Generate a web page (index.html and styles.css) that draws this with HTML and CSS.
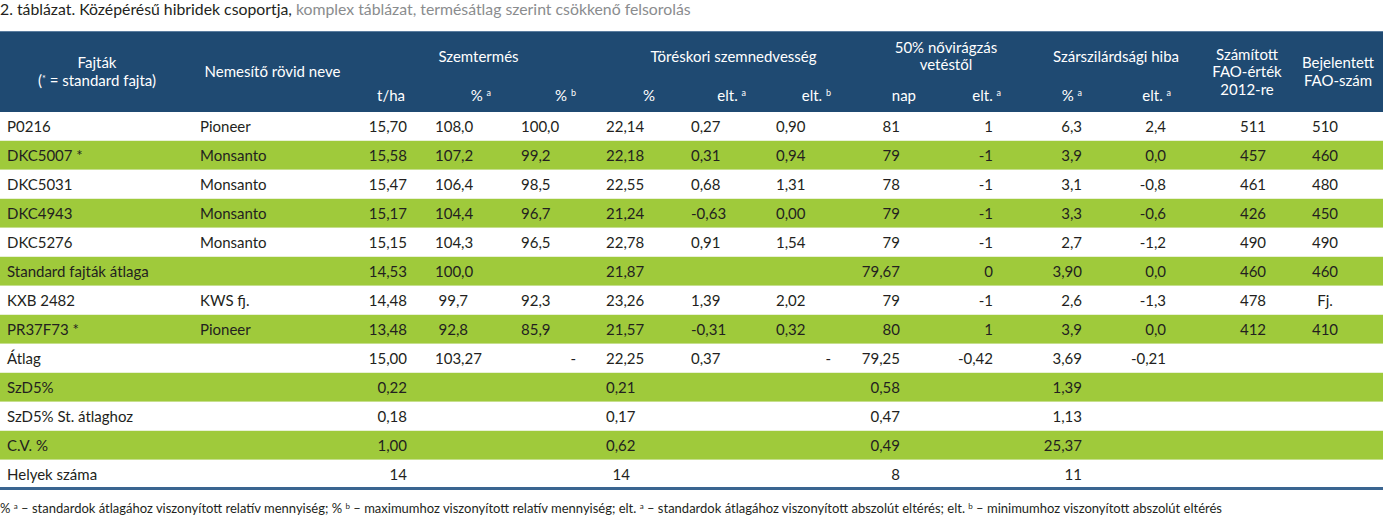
FILE: index.html
```html
<!DOCTYPE html>
<html lang="hu">
<head>
<meta charset="utf-8">
<title>2. táblázat</title>
<link rel="stylesheet" href="styles.css">
</head>
<body>
<div class="page">
  <p class="caption"><span class="cap-strong">2. táblázat. Középérésű hibridek csoportja,</span> <span class="cap-light">komplex táblázat, termésátlag szerint csökkenő felsorolás</span></p>
  <table class="data">
    <colgroup>
      <col class="w194"><col class="w157"><col class="w84">
      <col class="w86"><col class="w85"><col class="w85"><col class="w85"><col class="w85">
      <col class="w85"><col class="w85"><col class="w85"><col class="w85">
      <col class="w92"><col class="w90">
    </colgroup>
    <thead>
      <tr class="hrow1">
        <th rowspan="2" class="hc">Fajták<br>(<sup class="star">*</sup> = standard fajta)</th>
        <th rowspan="2" class="hc">Nemesítő rövid neve</th>
        <th colspan="3" class="hg">Szemtermés</th>
        <th colspan="3" class="hg">Töréskori szemnedvesség</th>
        <th colspan="2" class="hg">50% nővirágzás<br>vetéstől</th>
        <th colspan="2" class="hg">Szárszilárdsági hiba</th>
        <th rowspan="2" class="hc">Számított<br>FAO-érték<br>2012-re</th>
        <th rowspan="2" class="hc">Bejelentett<br>FAO-szám</th>
      </tr>
      <tr class="hrow2">
        <th class="hs">t/ha</th>
        <th class="hs">% <sup>a</sup></th>
        <th class="hs">% <sup>b</sup></th>
        <th class="hs hs-pct">%</th>
        <th class="hs">elt. <sup>a</sup></th>
        <th class="hs">elt. <sup>b</sup></th>
        <th class="hs">nap</th>
        <th class="hs">elt. <sup>a</sup></th>
        <th class="hs hs-pct2">% <sup>a</sup></th>
        <th class="hs">elt. <sup>a</sup></th>
      </tr>
    </thead>
    <tbody>
      <tr><td>P0216</td><td>Pioneer</td><td>15,70</td><td>108,0</td><td>100,0</td><td>22,14</td><td>0,27</td><td>0,90</td><td>81</td><td>1</td><td>6,3</td><td>2,4</td><td>511</td><td>510</td></tr>
      <tr class="g"><td>DKC5007 *</td><td>Monsanto</td><td>15,58</td><td>107,2</td><td>99,2</td><td>22,18</td><td>0,31</td><td>0,94</td><td>79</td><td>-1</td><td>3,9</td><td>0,0</td><td>457</td><td>460</td></tr>
      <tr><td>DKC5031</td><td>Monsanto</td><td>15,47</td><td>106,4</td><td>98,5</td><td>22,55</td><td>0,68</td><td>1,31</td><td>78</td><td>-1</td><td>3,1</td><td>-0,8</td><td>461</td><td>480</td></tr>
      <tr class="g"><td>DKC4943</td><td>Monsanto</td><td>15,17</td><td>104,4</td><td>96,7</td><td>21,24</td><td>-0,63</td><td>0,00</td><td>79</td><td>-1</td><td>3,3</td><td>-0,6</td><td>426</td><td>450</td></tr>
      <tr><td>DKC5276</td><td>Monsanto</td><td>15,15</td><td>104,3</td><td>96,5</td><td>22,78</td><td>0,91</td><td>1,54</td><td>79</td><td>-1</td><td>2,7</td><td>-1,2</td><td>490</td><td>490</td></tr>
      <tr class="g"><td>Standard fajták átlaga</td><td></td><td>14,53</td><td>100,0</td><td></td><td>21,87</td><td></td><td></td><td>79,67</td><td>0</td><td>3,90</td><td>0,0</td><td>460</td><td>460</td></tr>
      <tr><td>KXB 2482</td><td>KWS fj.</td><td>14,48</td><td>99,7</td><td>92,3</td><td>23,26</td><td>1,39</td><td>2,02</td><td>79</td><td>-1</td><td>2,6</td><td>-1,3</td><td>478</td><td>Fj.</td></tr>
      <tr class="g"><td>PR37F73 *</td><td>Pioneer</td><td>13,48</td><td>92,8</td><td>85,9</td><td>21,57</td><td>-0,31</td><td>0,32</td><td>80</td><td>1</td><td>3,9</td><td>0,0</td><td>412</td><td>410</td></tr>
      <tr><td>Átlag</td><td></td><td>15,00</td><td>103,27</td><td class="dash">-</td><td>22,25</td><td>0,37</td><td class="dash">-</td><td>79,25</td><td>-0,42</td><td>3,69</td><td>-0,21</td><td></td><td></td></tr>
      <tr class="g"><td>SzD5%</td><td></td><td>0,22</td><td></td><td></td><td>0,21</td><td></td><td></td><td>0,58</td><td></td><td>1,39</td><td></td><td></td><td></td></tr>
      <tr><td>SzD5% St. átlaghoz</td><td></td><td>0,18</td><td></td><td></td><td>0,17</td><td></td><td></td><td>0,47</td><td></td><td>1,13</td><td></td><td></td><td></td></tr>
      <tr class="g"><td>C.V. %</td><td></td><td>1,00</td><td></td><td></td><td>0,62</td><td></td><td></td><td>0,49</td><td></td><td>25,37</td><td></td><td></td><td></td></tr>
      <tr class="last"><td>Helyek száma</td><td></td><td>14</td><td></td><td></td><td>14</td><td></td><td></td><td>8</td><td></td><td>11</td><td></td><td></td><td></td></tr>
    </tbody>
  </table>
  <p class="note">% <sup>a</sup> – standardok átlagához viszonyított relatív mennyiség; % <sup>b</sup> – maximumhoz viszonyított relatív mennyiség; elt. <sup>a</sup> – standardok átlagához viszonyított abszolút eltérés; elt. <sup>b</sup> – minimumhoz viszonyított abszolút eltérés</p>
</div>
</body>
</html>
```

FILE: styles.css
```css
html, body {
  margin: 0;
  padding: 0;
  background: #ffffff;
}

.page {
  width: 1383px;
  font-family: Lato, "Open Sans", "Liberation Sans", sans-serif;
  color: #231f20;
}

.caption {
  margin: 0;
  height: 31px;
  line-height: 17px;
  font-size: 15.8px;
  box-sizing: border-box;
}

.cap-strong { color: #231f20; }
.cap-light { color: #8a8c8e; }

.data {
  width: 1383px;
  border-collapse: collapse;
  table-layout: fixed;
  font-size: 15px;
}

.w194 { width: 194px; }
.w157 { width: 157px; }
.w84 { width: 84px; }
.w86 { width: 86px; }
.w85 { width: 85px; }
.w92 { width: 92px; }
.w90 { width: 90px; }

thead tr {
  background: #1f4a72;
  color: #ffffff;
}

.data th {
  font-weight: normal;
  padding: 0;
  line-height: 17.5px;
}

.hrow1 { height: 49px; }
.hrow2 { height: 31px; }

.hrow1 th { border-top: 1px solid #5b7d9f; }

.hc { text-align: center; vertical-align: middle; }
.hg { text-align: center; vertical-align: middle; }

.hs {
  text-align: right;
  padding-right: 30px !important;
  vertical-align: middle;
}
.hs-pct { padding-right: 36px !important; }
.hs-pct2 { padding-right: 34px !important; }

.star {
  font-size: 9px;
  vertical-align: 4px;
  line-height: 0;
}

sup {
  font-size: 9px;
  vertical-align: 5px;
  line-height: 0;
}

.data td {
  height: 29px;
  padding: 0;
  box-sizing: border-box;
  white-space: nowrap;
  text-align: right;
  vertical-align: middle;
  border-bottom: 1px solid #e8f1d6;
}

tbody tr.g { background: #9fca3b; }
tbody tr.g td { border-bottom-color: #c6df8e; }

tbody tr.last td { border-bottom: 3px solid #3a6590; }

.data td:nth-child(1) { text-align: left; padding-left: 7px; }
.data td:nth-child(2) { text-align: left; padding-left: 6px; }
.data td:nth-child(3) { padding-right: 28px; }
.data td:nth-child(4) { padding-right: 53px; }
.data td:nth-child(5) { padding-right: 56px; }
.data td:nth-child(6) { padding-right: 61px; }
.data td:nth-child(7) { padding-right: 64px; }
.data td:nth-child(8) { padding-right: 68px; }
.data td:nth-child(9) { padding-right: 46px; }
.data td:nth-child(10) { padding-right: 38px; }
.data td:nth-child(11) { padding-right: 34px; }
.data td:nth-child(12) { padding-right: 35px; }
.data td:nth-child(13) { text-align: center; padding-left: 12px; }
.data td:nth-child(14) { text-align: center; padding-right: 26px; }

.data td.dash { padding-right: 30px; }

.note {
  margin: 0;
  padding-top: 10px;
  font-size: 13px;
  line-height: 16px;
  color: #231f20;
}

.note sup {
  font-size: 8px;
  vertical-align: 4px;
}
```
